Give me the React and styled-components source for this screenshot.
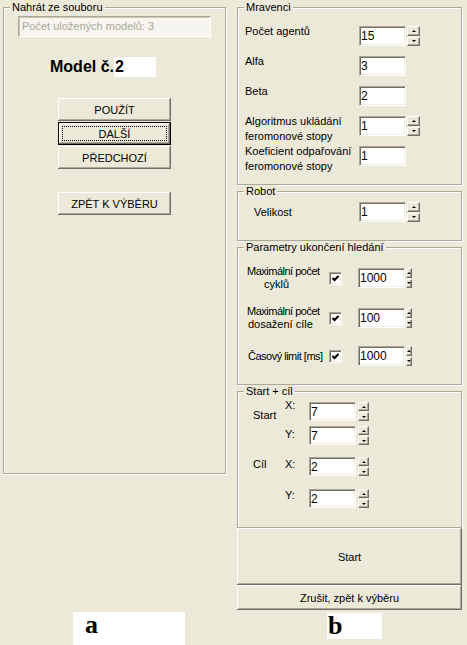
import React from "react";
import styled, { createGlobalStyle } from "styled-components";

const GlobalStyle = createGlobalStyle`
  html, body {
    margin: 0;
    padding: 0;
    background: #ece9d8;
  }
  body {
    font-family: "Liberation Sans", Arial, sans-serif;
    font-size: 11px;
    color: #000;
  }
`;

const Page = styled.div`
  width: 467px;
  height: 645px;
  overflow: hidden;
  background: #ece9d8;
`;

const Top = styled.div`
  display: flex;
  align-items: flex-start;
  padding: 7px 0 0 3px;
`;

const GroupBox = styled.div`
  position: relative;
  box-sizing: border-box;
  width: ${(p) => p.$w}px;
  height: ${(p) => p.$h}px;
  margin-top: ${(p) => p.$mt || 0}px;
  padding: ${(p) => p.$pad || "0"};
  border: 1px solid #aca899;
  box-shadow: inset 1px 1px 0 #fff, 1px 1px 0 #fff;
`;

const Title = styled.span`
  position: absolute;
  top: -7px;
  left: 6px;
  padding: 0 2px;
  line-height: 13px;
  background: #ece9d8;
  white-space: nowrap;
`;

/* ---------- left panel ---------- */

const ReadOnlyBox = styled.div`
  box-sizing: border-box;
  width: 193px;
  height: 21px;
  padding: 0 3px;
  line-height: 19px;
  color: #aca899;
  background: #f6f5f0;
  border-top: 1px solid #aca899;
  border-left: 1px solid #aca899;
  border-right: 1px solid #fff;
  border-bottom: 1px solid #fff;
  box-shadow: inset 1px 1px 0 #c9c6b8;
`;

const ModelRow = styled.div`
  display: flex;
  margin: 20px 0 0 32px;
  height: 20px;
  font-size: 16px;
  font-weight: bold;
  line-height: 20px;
`;

const ModelValue = styled.span`
  width: 42px;
  padding-left: 1px;
  box-sizing: border-box;
  background: #fff;
`;

const Button = styled.button`
  position: relative;
  display: block;
  box-sizing: border-box;
  width: ${(p) => p.$w}px;
  height: ${(p) => p.$h}px;
  margin: ${(p) => p.$mt || 0}px 0 0 ${(p) => p.$ml || 0}px;
  padding: 0;
  font-family: "Liberation Sans", Arial, sans-serif;
  font-size: 11px;
  color: #000;
  background: #ece9d8;
  border: ${(p) => (p.$focused ? "1px solid #000" : "none")};
  box-shadow: inset -1px -1px 0 #716f64, inset 1px 1px 0 #fff,
    inset -2px -2px 0 #aca899;

  &::after {
    content: "";
    display: ${(p) => (p.$focused ? "block" : "none")};
    position: absolute;
    inset: 3px;
    border: 1px dotted #000;
  }
`;

/* ---------- right panel ---------- */

const RightCol = styled.div`
  display: flex;
  flex-direction: column;
  width: 225px;
  margin-left: 11px;
`;

const Rows = styled.div`
  display: flex;
  flex-direction: column;
  gap: 10px;
`;

const FieldRow = styled.div`
  display: grid;
  grid-template-columns: 120px 47px 13px;
  column-gap: 1px;
  height: 20px;
  align-items: ${(p) => (p.$center ? "center" : "start")};
`;

const FieldLabel = styled.div`
  padding-left: ${(p) => p.$pl}px;
  margin-top: ${(p) => p.$dy || 0}px;
  line-height: 15px;
  white-space: nowrap;
`;

const NumInput = styled.div`
  box-sizing: border-box;
  height: ${(p) => p.$h || 20}px;
  padding-left: 1px;
  display: flex;
  align-items: center;
  font-size: 12px;
  background: #fff;
  border-top: 1px solid #aca899;
  border-left: 1px solid #aca899;
  border-right: 1px solid #fff;
  border-bottom: 1px solid #fff;
  box-shadow: inset 1px 1px 0 #716f64, inset -1px -1px 0 #f1efe2;
`;

const Spin = styled.div`
  display: flex;
  flex-direction: column;
  gap: 1px;
  height: ${(p) => p.$h || 20}px;
`;

const SpinBtn = styled.div`
  flex: 1;
  box-sizing: border-box;
  display: flex;
  align-items: center;
  justify-content: center;
  background: #ece9d8;
  border-top: 1px solid #fff;
  border-left: 1px solid #fff;
  border-right: 1px solid #716f64;
  border-bottom: 1px solid #716f64;
  box-shadow: inset -1px -1px 0 #aca899;

  &::after {
    content: "";
    border-left: 2px solid transparent;
    border-right: 2px solid transparent;
    ${(p) =>
      p.$down ? "border-top: 2px solid #000;" : "border-bottom: 2px solid #000;"}
  }
`;

const Spinner = ({ h }) => (
  <Spin $h={h}>
    <SpinBtn />
    <SpinBtn $down />
  </Spin>
);

const LimitRow = styled.div`
  display: flex;
  align-items: center;
  height: 26px;
  margin-top: ${(p) => p.$mt}px;
`;

const LimitLabel = styled.div`
  width: 82px;
  margin-left: 9px;
  line-height: 13px;
  white-space: nowrap;
`;

const Line = styled.span`
  display: block;
  padding-left: ${(p) => p.$pl || 0}px;
  letter-spacing: ${(p) => (p.$tight ? "-0.5px" : "normal")};
`;

const CheckBox = styled.div`
  box-sizing: border-box;
  width: 13px;
  height: 13px;
  margin-right: 16px;
  display: flex;
  align-items: center;
  justify-content: center;
  background: #fff;
  border-top: 1px solid #aca899;
  border-left: 1px solid #aca899;
  border-right: 1px solid #fff;
  border-bottom: 1px solid #fff;
  box-shadow: inset 1px 1px 0 #716f64, inset -1px -1px 0 #f1efe2;
`;

const LimitInput = styled(NumInput)`
  width: 47px;
  margin-right: 1px;
`;

const Checked = () => (
  <CheckBox>
    <svg width="7" height="7" viewBox="0 0 7 7">
      <polyline points="0.5,3 2.5,5 6.5,1" fill="none" stroke="#000" strokeWidth="2" />
    </svg>
  </CheckBox>
);

const Coords = styled.div`
  display: grid;
  grid-template-columns: 32px 24px 47px 13px;
  grid-template-rows: 24px 31px 32px 20px;
  column-gap: 0;
  align-items: start;
`;

const GroupName = styled.div`
  grid-column: 1;
  grid-row: ${(p) => p.$row};
  margin-top: ${(p) => p.$dy}px;
  line-height: 13px;
`;

const Axis = styled.div`
  grid-column: 2;
  grid-row: ${(p) => p.$row};
  margin-top: ${(p) => p.$dy}px;
  line-height: 13px;
`;

const CoordInput = styled(NumInput)`
  grid-column: 3;
  grid-row: ${(p) => p.$row};
`;

const CoordSpin = styled.div`
  grid-column: 4;
  grid-row: ${(p) => p.$row};
  margin-left: 2px;
`;

/* ---------- bottom captions ---------- */

const Captions = styled.div`
  display: flex;
  align-items: flex-start;
  margin-top: 2px;
`;

const Caption = styled.div`
  box-sizing: border-box;
  width: ${(p) => p.$w}px;
  height: ${(p) => p.$h}px;
  margin: ${(p) => p.$mt || 0}px 0 0 ${(p) => p.$ml}px;
  padding-left: ${(p) => p.$pl}px;
  background: #fff;
  font-family: "Liberation Serif", "Times New Roman", serif;
  font-weight: bold;
  font-size: 26px;
  line-height: 26px;
`;

const coords = [
  { row: 1, axis: "X:", dy: -3, value: "7" },
  { row: 2, axis: "Y:", dy: 2, value: "7" },
  { row: 3, axis: "X:", dy: 1, value: "2" },
  { row: 4, axis: "Y:", dy: 0, value: "2" },
];

export default function App() {
  return (
    <Page>
      <GlobalStyle />
      <Top>
        <GroupBox $w={223} $h={467} $pad="8px 0 0 14px">
          <Title>Nahrát ze souboru</Title>
          <ReadOnlyBox>Počet uložených modelů: 3</ReadOnlyBox>
          <ModelRow>
            <span>Model č.</span>
            <ModelValue>2</ModelValue>
          </ModelRow>
          <Button $w={113} $h={23} $mt={21} $ml={40}>POUŽÍT</Button>
          <Button $w={113} $h={23} $mt={1} $ml={40} $focused>DALŠÍ</Button>
          <Button $w={113} $h={23} $mt={1} $ml={40}>PŘEDCHOZÍ</Button>
          <Button $w={113} $h={23} $mt={23} $ml={40}>ZPĚT K VÝBĚRU</Button>
        </GroupBox>

        <RightCol>
          <GroupBox $w={225} $h={178} $pad="18px 0 0 0">
            <Title>Mravenci</Title>
            <Rows>
              <FieldRow>
                <FieldLabel $pl={7} $dy={-2}>Počet agentů</FieldLabel>
                <NumInput>15</NumInput>
                <Spinner />
              </FieldRow>
              <FieldRow>
                <FieldLabel $pl={7} $dy={-2}>Alfa</FieldLabel>
                <NumInput>3</NumInput>
              </FieldRow>
              <FieldRow>
                <FieldLabel $pl={7} $dy={-2}>Beta</FieldLabel>
                <NumInput>2</NumInput>
              </FieldRow>
              <FieldRow>
                <FieldLabel $pl={7} $dy={-2}>
                  Algoritmus ukládání
                  <br />
                  feromonové stopy
                </FieldLabel>
                <NumInput>1</NumInput>
                <Spinner />
              </FieldRow>
              <FieldRow>
                <FieldLabel $pl={7} $dy={-2}>
                  Koeficient odpařování
                  <br />
                  feromonové stopy
                </FieldLabel>
                <NumInput>1</NumInput>
              </FieldRow>
            </Rows>
          </GroupBox>

          <GroupBox $w={225} $h={50} $mt={6} $pad="10px 0 0 0">
            <Title>Robot</Title>
            <FieldRow $center>
              <FieldLabel $pl={16}>Velikost</FieldLabel>
              <NumInput>1</NumInput>
              <Spinner />
            </FieldRow>
          </GroupBox>

          <GroupBox $w={225} $h={138} $mt={6} $pad="0">
            <Title>Parametry ukončení hledání</Title>
            <LimitRow $mt={17}>
              <LimitLabel>
                <Line $tight>Maximální počet</Line>
                <Line $pl={17}>cyklů</Line>
              </LimitLabel>
              <Checked />
              <LimitInput>1000</LimitInput>
              <Spinner />
            </LimitRow>
            <LimitRow $mt={14}>
              <LimitLabel>
                <Line $tight>Maximální počet</Line>
                <Line $pl={1}>dosažení cíle</Line>
              </LimitLabel>
              <Checked />
              <LimitInput>100</LimitInput>
              <Spinner />
            </LimitRow>
            <LimitRow $mt={12}>
              <LimitLabel>
                <Line $tight $pl={1}>Časový limit [ms]</Line>
              </LimitLabel>
              <Checked />
              <LimitInput>1000</LimitInput>
              <Spinner />
            </LimitRow>
          </GroupBox>

          <GroupBox $w={225} $h={137} $mt={6} $pad="10px 0 0 15px">
            <Title>Start + cíl</Title>
            <Coords>
              <GroupName $row="1 / span 2" $dy={7}>Start</GroupName>
              <GroupName $row={3} $dy={1}>Cíl</GroupName>
              {coords.map((c) => (
                <React.Fragment key={c.row}>
                  <Axis $row={c.row} $dy={c.dy}>{c.axis}</Axis>
                  <CoordInput $row={c.row} $h={19}>{c.value}</CoordInput>
                  <CoordSpin $row={c.row}>
                    <Spinner h={19} />
                  </CoordSpin>
                </React.Fragment>
              ))}
            </Coords>
          </GroupBox>

          <Button $w={225} $h={57}>Start</Button>
          <Button $w={225} $h={25}>Zrušit, zpět k výběru</Button>
        </RightCol>
      </Top>

      <Captions>
        <Caption $w={112} $h={33} $ml={73} $pl={12}>a</Caption>
        <Caption $w={55} $h={26} $mt={1} $ml={142} $pl={1}>b</Caption>
      </Captions>
    </Page>
  );
}
